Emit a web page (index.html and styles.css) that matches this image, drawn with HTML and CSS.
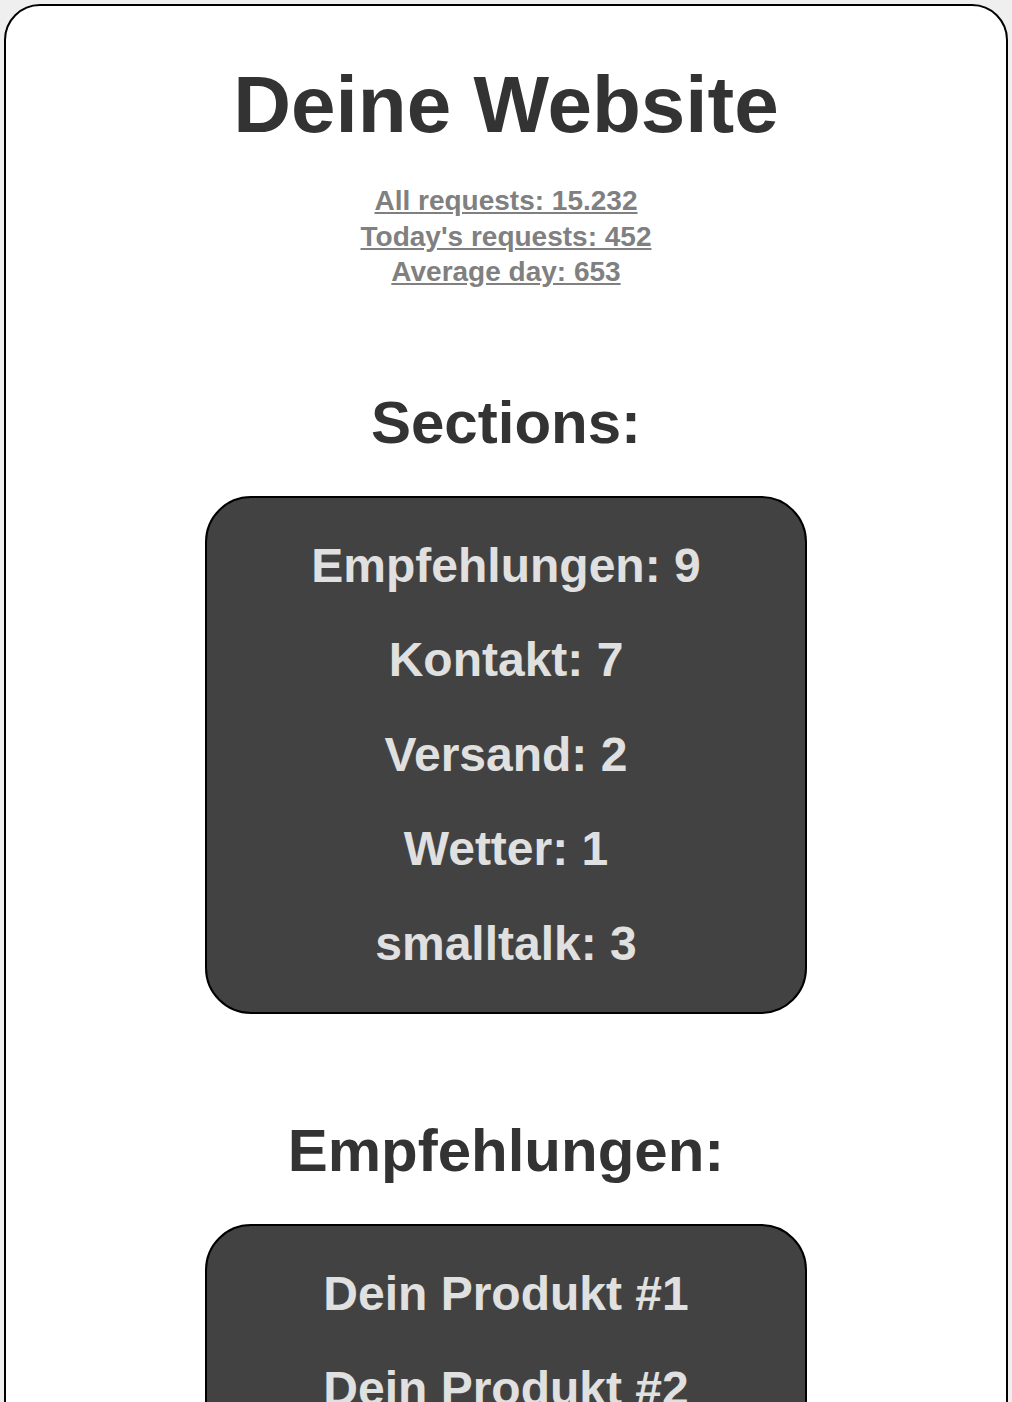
FILE: index.html
```html
<!DOCTYPE html>
<html lang="en">
<head>
    <meta charset="UTF-8">
    <meta name="viewport" content="width=device-width, initial-scale=1.0">
    <title>Deine Website</title>
    <link rel="stylesheet" href="styles.css">
</head>
<body>

    <div class="card">
        <h1 class="title">Deine Website</h1>

        <div class="stats">
            <a href="#" class="stat">All requests: 15.232</a>
            <a href="#" class="stat">Today's requests: 452</a>
            <a href="#" class="stat">Average day: 653</a>
        </div>

        <h2 class="heading">Sections:</h2>
        <div class="box">
            <div class="item">Empfehlungen: 9</div>
            <div class="item">Kontakt: 7</div>
            <div class="item">Versand: 2</div>
            <div class="item">Wetter: 1</div>
            <div class="item">smalltalk: 3</div>
        </div>

        <h2 class="heading">Empfehlungen:</h2>
        <div class="box">
            <div class="item">Dein Produkt #1</div>
            <div class="item">Dein Produkt #2</div>
            <div class="item">Dein Produkt #3</div>
            <div class="item">Dein Produkt #4</div>
            <div class="item">Dein Produkt #5</div>
            <div class="item">Dein Produkt #6</div>
            <div class="item">Dein Produkt #7</div>
            <div class="item">Dein Produkt #8</div>
            <div class="item">Dein Produkt #9</div>
        </div>
    </div>

</body>
</html>
```

FILE: styles.css
```css
body {
    margin: 0;
    padding: 4px;
    background-color: #efefef;
    font-family: "Liberation Sans", Arial, sans-serif;
}

.card {
    background-color: #fff;
    border: 2px solid #000;
    border-radius: 36px;
    text-align: center;
    padding-bottom: 60px;
}

.title {
    margin: 53px 0 0;
    font-size: 80px;
    line-height: 92px;
    color: #333;
}

.stats {
    display: flex;
    flex-direction: column;
    align-items: center;
    margin-top: 32px;
}

.stat {
    font-size: 28px;
    line-height: 35.5px;
    font-weight: bold;
    color: #808080;
    text-decoration: underline;
}

.heading {
    margin: 98px 0 0;
    font-size: 60px;
    line-height: 69px;
    color: #333;
}

.box {
    width: 598px;
    margin: 39px auto 102px;
    padding: 21px 0;
    background-color: #424242;
    border: 2px solid #000;
    border-radius: 46px;
}

.item {
    font-size: 48px;
    line-height: 94.5px;
    font-weight: bold;
    color: #e0e0e0;
}
```
